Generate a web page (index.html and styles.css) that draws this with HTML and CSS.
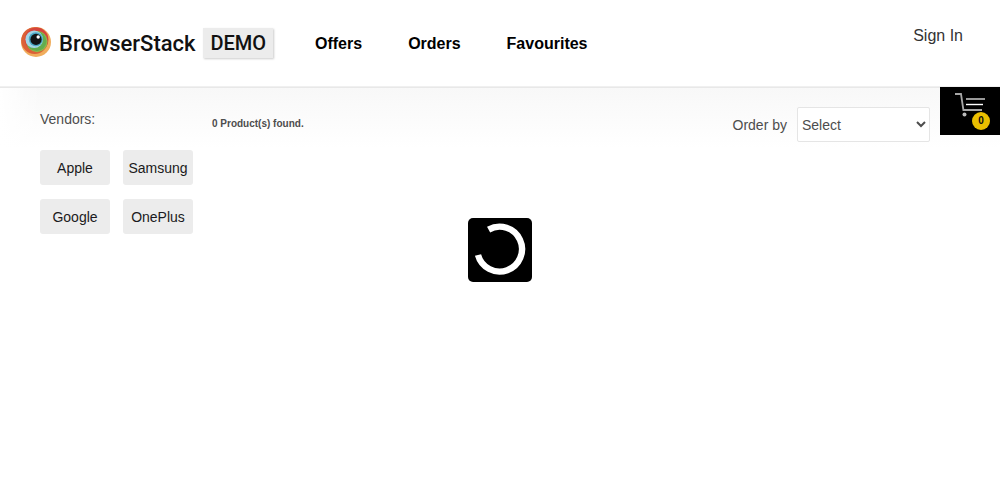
FILE: index.html
```html
<!DOCTYPE html>
<html lang="en">
<head>
<meta charset="utf-8">
<title>BrowserStack Demo</title>
<link rel="stylesheet" href="styles.css">
</head>
<body>
<header class="header">
  <a class="logo" href="#">
    <svg class="logo-mark" viewBox="0 0 30 30" aria-hidden="true">
      <circle cx="15" cy="15" r="15" fill="#f0ad5c"/>
      <circle cx="13.6" cy="13.6" r="13.4" fill="#dc6137"/>
      <circle cx="15.6" cy="12.4" r="11.8" fill="#d5453c"/>
      <circle cx="16" cy="14.6" r="10.6" fill="#8fb848"/>
      <circle cx="15.6" cy="14.2" r="9.8" fill="#62ad4f"/>
      <circle cx="13.2" cy="12.2" r="8.8" fill="#a4d5e6"/>
      <circle cx="14.8" cy="12.2" r="7" fill="#4aa7c4"/>
      <circle cx="15" cy="12.4" r="5.6" fill="#121416"/>
      <circle cx="17.2" cy="10" r="1.7" fill="#fff"/>
    </svg>
    <span class="logo-name">BrowserStack</span>
    <span class="logo-tag">DEMO</span>
  </a>
  <nav class="nav">
    <a href="#">Offers</a>
    <a href="#">Orders</a>
    <a href="#">Favourites</a>
  </nav>
  <a class="sign-in" href="#">Sign In</a>
</header>
<main class="main">
  <aside class="filters">
    <h2 class="filters-title">Vendors:</h2>
    <div class="vendors">
      <button type="button">Apple</button>
      <button type="button">Samsung</button>
      <button type="button">Google</button>
      <button type="button">OnePlus</button>
    </div>
  </aside>
  <section class="shelf">
    <small class="found">0 Product(s) found.</small>
    <div class="sort">
      <label for="sort">Order by</label>
      <select id="sort"><option>Select</option></select>
    </div>
  </section>
  <button class="cart" type="button" aria-label="Cart">
    <svg class="cart-icon" viewBox="0 0 32 26" fill="none" aria-hidden="true">
      <path d="M0 2h6l2.4 16h18.6" stroke="#a6a6a6" stroke-width="1.8"/>
      <path d="M11 7h19" stroke="#999" stroke-width="2"/>
      <path d="M11 12.5h17" stroke="#fff" stroke-width="1.4"/>
      <circle cx="9.5" cy="22.6" r="2" fill="#bbb"/>
    </svg>
    <span class="badge">0</span>
  </button>
</main>
<div class="spinner" role="status" aria-label="Loading">
  <svg viewBox="0 0 64 64" aria-hidden="true">
    <path d="M20.6 11.6A22.4 22.4 0 1 1 10 37" fill="none" stroke="#fff" stroke-width="6.4"/>
  </svg>
</div>
</body>
</html>
```
FILE: styles.css
```css
* {
  box-sizing: border-box;
}

body {
  margin: 0;
  font-family: "Liberation Sans", Arial, sans-serif;
  font-size: 14px;
  color: #4d4d4d;
  background: #fff;
}

a {
  color: inherit;
  text-decoration: none;
}

button {
  font: inherit;
  border: 0;
  cursor: pointer;
}

.header {
  display: flex;
  align-items: center;
  height: 87px;
  padding: 1px 37px 0 21px;
  color: #000;
  box-shadow: inset 0 -1px #f0f0f0;
}

.logo {
  display: flex;
  align-items: center;
  width: 294px;
}

.logo-mark {
  width: 30px;
  height: 30px;
  margin: 0 8px 4px 0;
}

.logo-name,
.logo-tag {
  font-family: Roboto, "Liberation Sans", sans-serif;
  font-size: 22px;
  line-height: 30px;
  font-weight: 500;
  color: #111;
}

.logo-tag {
  margin: 0 42px 2px auto;
  padding: 0 7px;
  background: #ececec;
  box-shadow: 1px 1px 2px #ccc;
  font-size: 20px;
}

.nav {
  display: flex;
  gap: 46px;
  font-size: 16px;
  font-weight: 700;
}

.sign-in {
  margin: 0 0 16px auto;
  font-size: 16px;
  color: #333;
}

.main {
  display: flex;
  align-items: flex-start;
  border-top: 1px solid #e8e8e8;
  background:
    linear-gradient(90deg, #fff, transparent 40px),
    linear-gradient(#f8f8f8, #fff 60px);
}

.filters {
  width: 212px;
  padding: 23px 0 0 40px;
}

.filters-title {
  margin: 0 0 23px;
  font-size: 14px;
  line-height: 16px;
  font-weight: 400;
}

.vendors {
  display: grid;
  grid-template-columns: 70px 70px;
  gap: 14px 13px;
}

.vendors button {
  height: 35px;
  padding: 0;
  border-radius: 3px;
  background: #ececec;
  color: #1b1a20;
}

.shelf {
  flex: 1;
  display: flex;
  justify-content: space-between;
  align-items: center;
  padding: 19px 10px 0 0;
}

.found {
  margin-bottom: 3px;
  font-size: 10px;
  font-weight: 700;
}

.sort {
  display: flex;
  align-items: center;
  gap: 10px;
}

.sort select {
  width: 133px;
  height: 35px;
  padding: 0;
  border: 1px solid #e5e5e5;
  border-radius: 2px;
  background: #fff;
  color: #4d4d4d;
  font: inherit;
}

.cart {
  position: relative;
  display: flex;
  align-items: flex-start;
  width: 60px;
  height: 48px;
  margin-top: -1px;
  padding: 5px 0 0 15px;
  background: #000;
}

.cart-icon {
  width: 32px;
  height: 26px;
}

.badge {
  position: absolute;
  right: 10px;
  bottom: 5px;
  width: 18px;
  height: 18px;
  border-radius: 50%;
  background: #eabf00;
  color: #0c0b10;
  font-size: 10px;
  line-height: 18px;
  font-weight: 700;
}

.spinner {
  position: fixed;
  top: 50%;
  left: 50%;
  width: 64px;
  height: 64px;
  margin: -32px 0 0 -32px;
  border-radius: 5px;
  background: #000;
}
```
